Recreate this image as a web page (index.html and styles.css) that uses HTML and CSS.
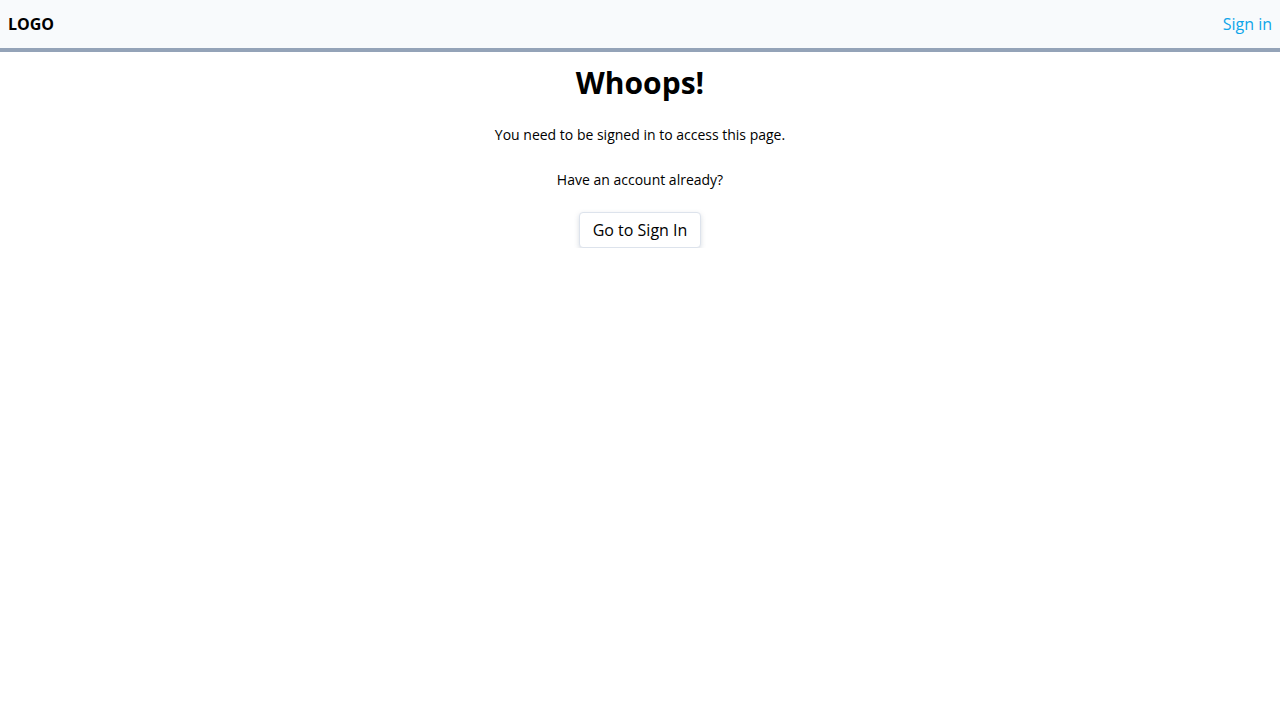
FILE: index.html
```html
<!DOCTYPE html>
<html>
<head>
<meta charset="utf-8">
<link rel="stylesheet" href="styles.css">
</head>
<body>
<header class="topbar">
  <div class="logo">LOGO</div>
  <a class="signin" href="#">Sign in</a>
</header>
<main class="content">
  <h1 class="title">Whoops!</h1>
  <p class="msg">You need to be signed in to access this page.</p>
  <p class="msg">Have an account already?</p>
  <button class="btn">Go to Sign In</button>
</main>
</body>
</html>
```
FILE: styles.css
```css
* { box-sizing: border-box; }
body {
  margin: 0;
  font-family: "Open Sans", "Noto Sans", sans-serif;
  color: #000;
  background: #fff;
}
.topbar {
  height: 52px;
  display: flex;
  align-items: center;
  justify-content: space-between;
  padding: 0 8px;
  background: #f8fafc;
  border-bottom: 4px solid #94a3b8;
}
.logo {
  font-weight: 700;
  font-size: 16px;
}
.signin {
  font-size: 16px;
  color: #0ea5e9;
  text-decoration: none;
}
.content {
  display: flex;
  flex-direction: column;
  align-items: center;
  padding-top: 12px;
}
.title {
  margin: 0;
  font-size: 30px;
  font-weight: 700;
  line-height: 38px;
}
.msg {
  margin: 0;
  font-size: 14px;
  line-height: 20px;
  margin-top: 23px;
}
.msg + .msg { margin-top: 25px; }
.btn {
  margin-top: 22px;
  font-family: inherit;
  font-size: 16px;
  height: 36px;
  padding: 0 13px;
  background: #fff;
  border: 1px solid #dde3ec;
  border-radius: 4px;
  box-shadow: 0 2px 5px rgba(100,116,139,0.25);
  color: #000;
}
```
